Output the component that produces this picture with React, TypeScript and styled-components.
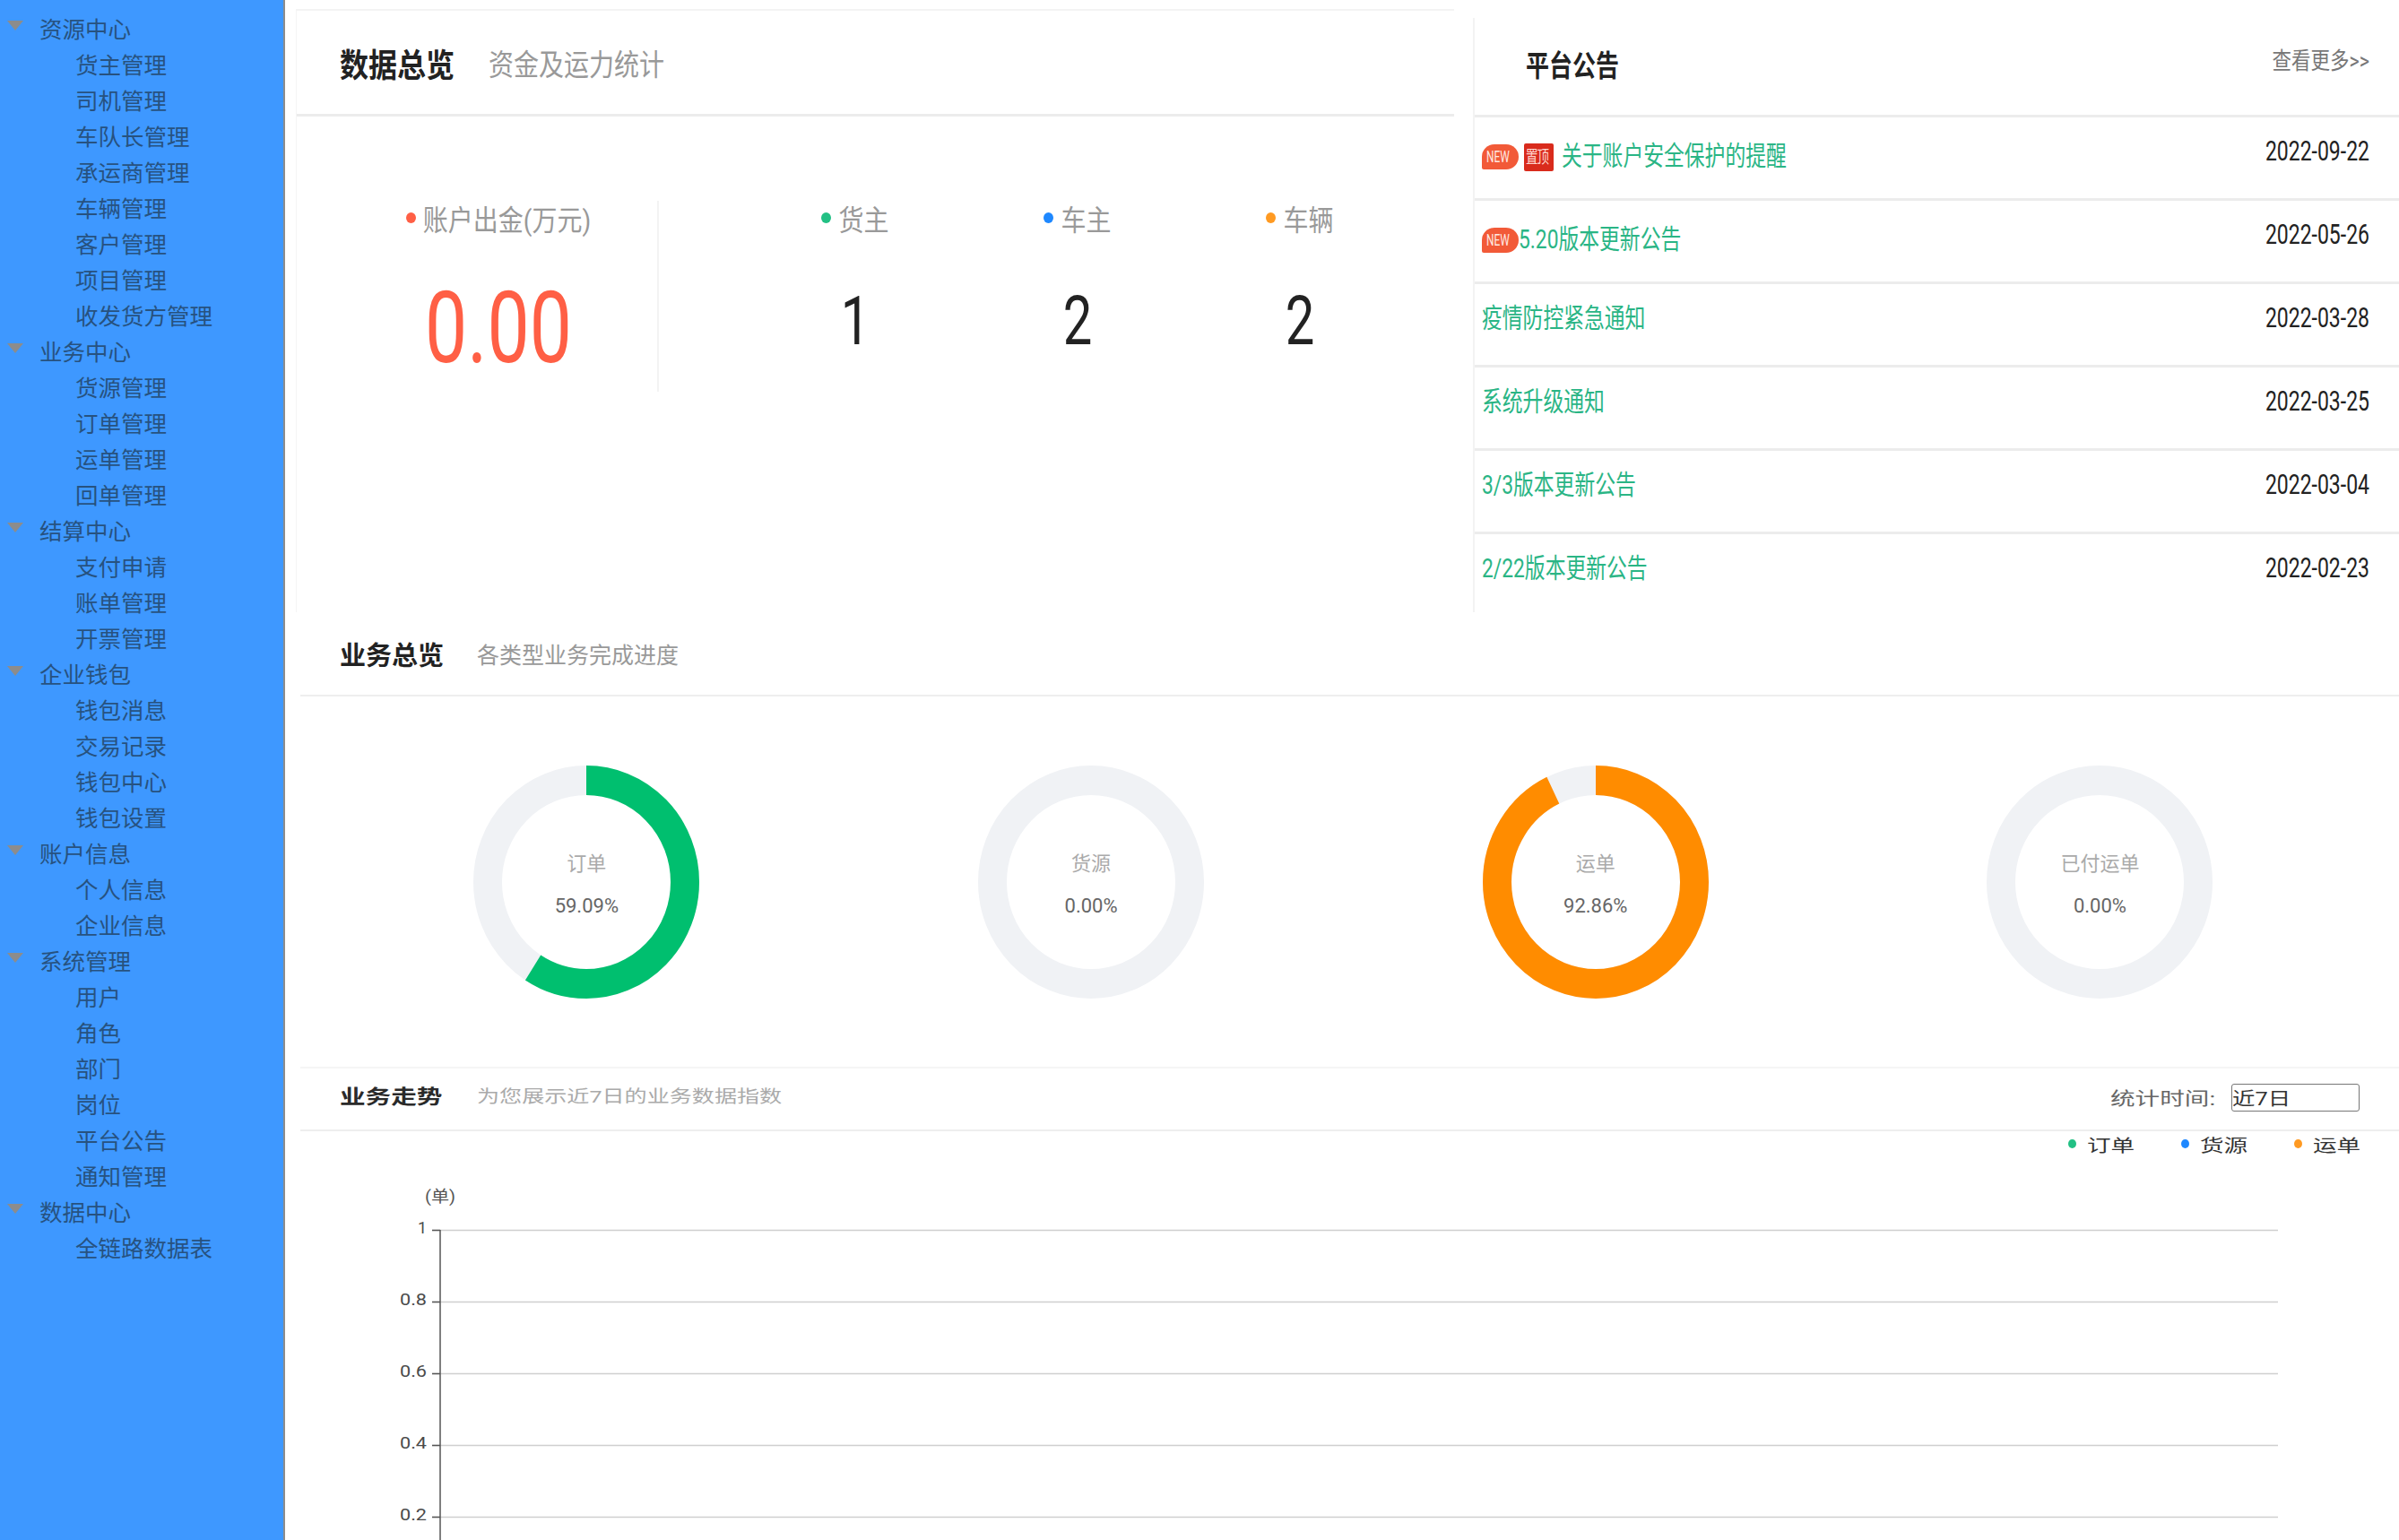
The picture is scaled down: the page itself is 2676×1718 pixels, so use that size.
import React from 'react';
import styled, { createGlobalStyle } from 'styled-components';

const GlobalStyle = createGlobalStyle`
  html, body {
    margin: 0;
    padding: 0;
    width: 2676px;
    height: 1718px;
    overflow: hidden;
    background: #fff;
    font-family: Roboto, "Noto Sans CJK SC", sans-serif;
  }
  * { box-sizing: border-box; }
`;

const Page = styled.div`
  display: grid;
  grid-template-columns: 318px 1fr;
  width: 2676px;
  height: 1718px;
  overflow: hidden;
`;

const Sidebar = styled.aside`
  background: #3e98ff;
  border-right: 2px solid #8c8c8c;
  padding-top: 10px;
  color: #27527f;
  font-size: 25.5px;
`;

const GroupRow = styled.div`
  display: flex;
  align-items: center;
  height: 40px;
  padding-left: 8px;
`;

const Caret = styled.span`
  width: 0;
  height: 0;
  margin-right: 18px;
  margin-top: -3px;
  border-left: 9px solid transparent;
  border-right: 9px solid transparent;
  border-top: 11px solid #8c8c8c;
`;

const ChildRow = styled.div`
  display: flex;
  align-items: center;
  height: 40px;
  padding-left: 84px;
`;

const Main = styled.main`
  padding-top: 10px;
  min-width: 0;
`;

const TopRow = styled.div`
  display: flex;
  height: 673px;
  padding-left: 12px;
`;

// the source shot is unevenly scaled, so text gets stretched per block
const Stretch = styled.span<{ $x?: number; $y?: number; $w?: number }>`
  display: inline-block;
  white-space: nowrap;
  transform-origin: left center;
  transform: scale(${p => p.$x ?? 1}, ${p => p.$y ?? 1});
  ${p => (p.$w ? `width: ${p.$w}px;` : '')}
`;

const DataPanel = styled.section`
  width: 1292px;
  border-top: 2px solid #f3f3f3;
  border-left: 1px solid #f5f5f5;
`;

const DataHeader = styled.header`
  display: flex;
  align-items: center;
  gap: 38px;
  height: 118px;
  padding-left: 48px;
  border-bottom: 3px solid #ececec;
`;

const DataTitle = styled.h2`
  margin: 0;
  font-size: 32px;
  font-weight: 700;
  color: #222;
`;

const DataSubtitle = styled.span`
  font-size: 28px;
  color: #999;
`;

const StatsRow = styled.div`
  display: flex;
  margin-top: 94px;
  height: 213px;
`;

const FundCell = styled.div`
  width: 404px;
  padding-left: 48px;
  border-right: 2px solid #f3f3f3;
  text-align: center;
`;

const CountCells = styled.div`
  display: grid;
  grid-template-columns: repeat(3, 248px);
  padding-left: 95px;
  text-align: center;
`;

const StatLabel = styled.div`
  display: flex;
  align-items: center;
  justify-content: center;
  gap: 8px;
  height: 38px;
  font-size: 28px;
  color: #999;
`;

const Dot = styled.i<{ $color: string; $size?: number }>`
  flex: none;
  width: ${p => p.$size ?? 11}px;
  height: ${p => (p.$size ?? 11) + 1}px;
  border-radius: 50%;
  background: ${p => p.$color};
`;

const FundValue = styled.div`
  margin-top: 55px;
  height: 100px;
  line-height: 100px;
  font-size: 84px;
  color: #ff5f45;
`;

const CountValue = styled.div`
  margin-top: 56px;
  height: 80px;
  line-height: 80px;
  font-size: 58px;
  color: #222;
`;

const NoticePanel = styled.section`
  flex: 1;
  margin-left: 21px;
  margin-top: 10px;
  border-left: 2px solid #f3f3f3;
`;

const NoticeHeader = styled.header`
  display: flex;
  align-items: center;
  justify-content: space-between;
  height: 111px;
  padding: 0 33px 8px 57px;
  border-bottom: 3px solid #ececec;
`;

const NoticeTitle = styled.h2`
  margin: 0;
  font-size: 26px;
  font-weight: 700;
  color: #222;
`;

const MoreLink = styled.a`
  margin-bottom: 10px;
  font-size: 21.5px;
  color: #777;
`;

const NoticeRow = styled.div`
  display: flex;
  justify-content: space-between;
  height: 93px;
  padding: 0 33px 0 8px;
  border-bottom: 3px solid #ececec;
  line-height: 78px;

  &:last-child {
    border-bottom: 0;
  }
`;

const NoticeText = styled.div<{ $pinned?: boolean }>`
  display: flex;
  align-items: center;
  height: 78px;
  font-size: 22.8px;
  color: #2ab585;
  margin-top: ${p => (p.$pinned ? 5 : 0)}px;
`;

const NewBadge = styled.span`
  display: flex;
  align-items: center;
  justify-content: center;
  width: 41px;
  height: 28px;
  border-radius: 14px 14px 14px 2px;
  background: #f25a38;
  color: #ffe9e2;
  font-size: 14px;
`;

const TopBadge = styled.span`
  display: flex;
  align-items: center;
  justify-content: center;
  width: 33px;
  height: 31px;
  margin: 0 9px 0 6px;
  border-radius: 2px;
  background: #d92b1c;
  color: #ffd9d2;
  font-size: 15px;
  letter-spacing: -1px;
`;

const NoticeDate = styled.span`
  font-size: 23px;
  color: #222;
`;

const Overview = styled.section`
  margin-left: 17px;
  height: 507px;
`;

const OverviewHeader = styled.header`
  display: flex;
  align-items: center;
  gap: 37px;
  height: 94px;
  padding-left: 44px;
  border-bottom: 2px solid #eeeeee;
`;

const OverviewTitle = styled.h3`
  margin: 0;
  font-size: 29px;
  font-weight: 700;
  color: #222;
`;

const OverviewSubtitle = styled.span`
  font-size: 25px;
  color: #999;
`;

const DonutRow = styled.div`
  display: grid;
  grid-template-columns: repeat(4, 562.7px);
  padding: 77px 0 0 38px;
`;

const DonutCell = styled.div`
  position: relative;
  justify-self: center;
  width: 252px;
  height: 260px;
`;

const DonutCaption = styled.div`
  position: absolute;
  inset: 0;
  display: flex;
  flex-direction: column;
  align-items: center;
  justify-content: center;
  gap: 19px;
  padding-top: 6px;
  line-height: 28px;
`;

const DonutLabel = styled.span`
  font-size: 22px;
  color: #aaa;
`;

const DonutValue = styled.span`
  font-size: 22px;
  color: #666;
`;

const Trend = styled.section`
  margin-left: 17px;
  border-top: 2px solid #f5f5f5;
`;

const TrendHeader = styled.header`
  display: flex;
  align-items: center;
  height: 70px;
  padding: 0 44px 0 44px;
  border-bottom: 2px solid #eeeeee;
`;

const TrendTitle = styled.h3`
  margin: 0 39px 10px 0;
  font-size: 22px;
  font-weight: 700;
  color: #2a2a2a;
`;

const TrendSubtitle = styled.span`
  flex: 1;
  margin-bottom: 10px;
  font-size: 19px;
  color: #aaa;
`;

const FilterLabel = styled.span`
  margin-bottom: 3px;
  font-size: 20px;
  color: #666;
`;

const FilterBox = styled.div`
  display: flex;
  align-items: center;
  width: 143px;
  height: 31px;
  margin: 0 0 3px 24px;
  border: 1px solid #777;
  border-radius: 3px;
  font-size: 20px;
  color: #333;
`;

const Legend = styled.div`
  display: flex;
  justify-content: flex-end;
  align-items: center;
  gap: 51px;
  height: 28px;
  padding-right: 42px;
`;

const LegendItem = styled.div`
  display: flex;
  align-items: center;
  gap: 12px;
  font-size: 19px;
  color: #333;
`;

const ChartSvg = styled.svg`
  display: block;
`;

const menu = [
  { name: '资源中心', items: ['货主管理', '司机管理', '车队长管理', '承运商管理', '车辆管理', '客户管理', '项目管理', '收发货方管理'] },
  { name: '业务中心', items: ['货源管理', '订单管理', '运单管理', '回单管理'] },
  { name: '结算中心', items: ['支付申请', '账单管理', '开票管理'] },
  { name: '企业钱包', items: ['钱包消息', '交易记录', '钱包中心', '钱包设置'] },
  { name: '账户信息', items: ['个人信息', '企业信息'] },
  { name: '系统管理', items: ['用户', '角色', '部门', '岗位', '平台公告', '通知管理'] },
  { name: '数据中心', items: ['全链路数据表'] },
];

const counts = [
  { label: '货主', value: 1, color: '#22c084' },
  { label: '车主', value: 2, color: '#1e88ff' },
  { label: '车辆', value: 2, color: '#ff9a22' },
];

const notices = [
  { title: '关于账户安全保护的提醒', date: '2022-09-22', isNew: true, pinned: true },
  { title: '5.20版本更新公告', date: '2022-05-26', isNew: true },
  { title: '疫情防控紧急通知', date: '2022-03-28' },
  { title: '系统升级通知', date: '2022-03-25' },
  { title: '3/3版本更新公告', date: '2022-03-04' },
  { title: '2/22版本更新公告', date: '2022-02-23' },
];

const donuts = [
  { label: '订单', percent: 59.09, color: '#00bf6f' },
  { label: '货源', percent: 0, color: '#00bf6f' },
  { label: '运单', percent: 92.86, color: '#ff8c00' },
  { label: '已付运单', percent: 0, color: '#ff8c00' },
];

const legend = [
  { label: '订单', color: '#22c084' },
  { label: '货源', color: '#1e88ff' },
  { label: '运单', color: '#ff9a22' },
];

const ticks = [
  { label: '1', y: 82, width: 10 },
  { label: '0.8', y: 162, width: 30 },
  { label: '0.6', y: 242, width: 30 },
  { label: '0.4', y: 322, width: 30 },
  { label: '0.2', y: 402, width: 30 },
];

const Donut: React.FC<{ label: string; percent: number; color: string }> = ({ label, percent, color }) => (
  <DonutCell>
    <svg width="252" height="260" viewBox="0 0 252 252" preserveAspectRatio="none">
      <circle cx="126" cy="126" r="110" fill="none" stroke="#f0f2f5" strokeWidth="32" />
      {percent > 0 && (
        <circle
          cx="126"
          cy="126"
          r="110"
          fill="none"
          stroke={color}
          strokeWidth="32"
          pathLength={100}
          strokeDasharray={`${percent} 100`}
          transform="rotate(-90 126 126)"
        />
      )}
    </svg>
    <DonutCaption>
      <DonutLabel>{label}</DonutLabel>
      <DonutValue>{percent.toFixed(2)}%</DonutValue>
    </DonutCaption>
  </DonutCell>
);

const TrendChart = () => (
  <ChartSvg width="2341" height="430" viewBox="0 0 2341 430">
    <text x="139" y="51" fontSize="18" fill="#555" textLength="34" lengthAdjust="spacingAndGlyphs">(单)</text>
    {ticks.map(t => (
      <g key={t.label}>
        <line x1="147" x2="2206" y1={t.y + 0.5} y2={t.y + 0.5} stroke="#cfcfcf" strokeWidth="1.5" />
        <line x1="147" x2="156" y1={t.y + 0.5} y2={t.y + 0.5} stroke="#555" strokeWidth="1.5" />
        <text
          x="141"
          y={t.y + 4}
          fontSize="19"
          fill="#4a4a4a"
          textAnchor="end"
          textLength={t.width}
          lengthAdjust="spacingAndGlyphs"
        >
          {t.label}
        </text>
      </g>
    ))}
    <line x1="156" x2="156" y1="82" y2="430" stroke="#555" strokeWidth="1.5" />
  </ChartSvg>
);

export default function App() {
  return (
    <Page>
      <GlobalStyle />
      <Sidebar>
        {menu.map(group => (
          <div key={group.name}>
            <GroupRow>
              <Caret />
              {group.name}
            </GroupRow>
            {group.items.map(item => (
              <ChildRow key={item}>{item}</ChildRow>
            ))}
          </div>
        ))}
      </Sidebar>

      <Main>
        <TopRow>
          <DataPanel>
            <DataHeader>
              <DataTitle><Stretch $y={1.15}>数据总览</Stretch></DataTitle>
              <DataSubtitle><Stretch $y={1.18}>资金及运力统计</Stretch></DataSubtitle>
            </DataHeader>
            <StatsRow>
              <FundCell>
                <StatLabel>
                  <Dot $color="#ff5f45" />
                  <Stretch $y={1.15}>账户出金(万元)</Stretch>
                </StatLabel>
                <FundValue><Stretch $y={1.33}>0.00</Stretch></FundValue>
              </FundCell>
              <CountCells>
                {counts.map(c => (
                  <div key={c.label}>
                    <StatLabel>
                      <Dot $color={c.color} />
                      <Stretch $y={1.15}>{c.label}</Stretch>
                    </StatLabel>
                    <CountValue><Stretch $y={1.3}>{c.value}</Stretch></CountValue>
                  </div>
                ))}
              </CountCells>
            </StatsRow>
          </DataPanel>

          <NoticePanel>
            <NoticeHeader>
              <NoticeTitle><Stretch $y={1.25}>平台公告</Stretch></NoticeTitle>
              <MoreLink><Stretch $y={1.2}>查看更多&gt;&gt;</Stretch></MoreLink>
            </NoticeHeader>
            {notices.map(n => (
              <NoticeRow key={n.date}>
                <NoticeText $pinned={n.isNew}>
                  {n.isNew && <NewBadge><Stretch $x={0.85} $y={1.25}>NEW</Stretch></NewBadge>}
                  {n.pinned && <TopBadge><Stretch $x={0.9} $y={1.3}>置顶</Stretch></TopBadge>}
                  <Stretch $y={1.3}>{n.title}</Stretch>
                </NoticeText>
                <NoticeDate><Stretch $y={1.35}>{n.date}</Stretch></NoticeDate>
              </NoticeRow>
            ))}
          </NoticePanel>
        </TopRow>

        <Overview>
          <OverviewHeader>
            <OverviewTitle>业务总览</OverviewTitle>
            <OverviewSubtitle>各类型业务完成进度</OverviewSubtitle>
          </OverviewHeader>
          <DonutRow>
            {donuts.map(d => (
              <Donut key={d.label} {...d} />
            ))}
          </DonutRow>
        </Overview>

        <Trend>
          <TrendHeader>
            <TrendTitle><Stretch $x={1.3} $w={114}>业务走势</Stretch></TrendTitle>
            <TrendSubtitle><Stretch $x={1.32}>为您展示近7日的业务数据指数</Stretch></TrendSubtitle>
            <FilterLabel><Stretch $x={1.38} $w={111}>统计时间:</Stretch></FilterLabel>
            <FilterBox><Stretch $x={1.27}>近7日</Stretch></FilterBox>
          </TrendHeader>
          <Legend>
            {legend.map(l => (
              <LegendItem key={l.label}>
                <Dot $color={l.color} $size={9} />
                <Stretch $x={1.4} $w={54}>{l.label}</Stretch>
              </LegendItem>
            ))}
          </Legend>
          <TrendChart />
        </Trend>
      </Main>
    </Page>
  );
}
